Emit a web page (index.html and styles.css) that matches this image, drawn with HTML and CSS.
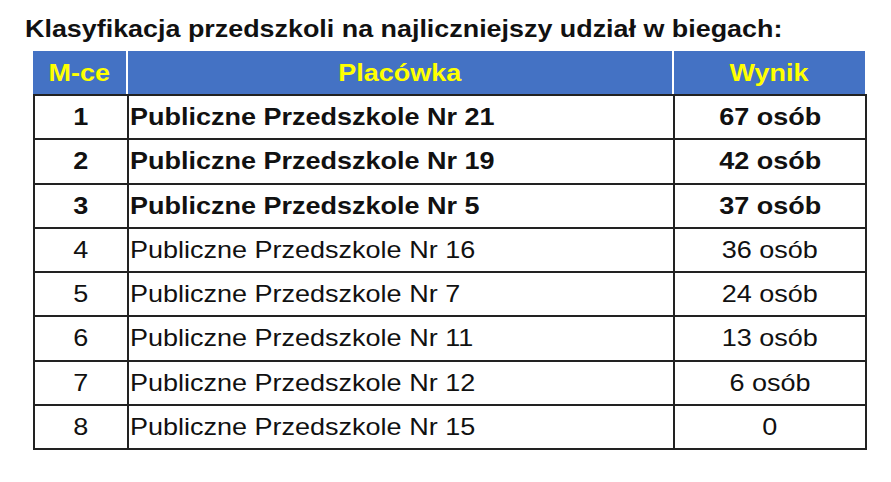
FILE: index.html
```html
<!DOCTYPE html>
<html lang="pl">
<head>
<meta charset="utf-8">
<title>Klasyfikacja przedszkoli</title>
<link rel="stylesheet" href="styles.css">
</head>
<body>
<div class="page">
  <h1 class="title"><span class="sx">Klasyfikacja przedszkoli na najliczniejszy udział w biegach:</span></h1>
  <div class="board">
    <div class="head">
      <div class="hcell"><span class="sx mid">M-ce</span></div>
      <div class="hcell"><span class="sx mid">Placówka</span></div>
      <div class="hcell"><span class="sx mid">Wynik</span></div>
    </div>
    <table class="ranking">
      <colgroup><col class="c1"><col class="c2"><col class="c3"></colgroup>
      <tbody>
        <tr class="top"><td class="num"><span class="sx mid">1</span></td><td class="name"><span class="sx">Publiczne Przedszkole Nr 21</span></td><td class="res"><span class="sx mid">67 osób</span></td></tr>
        <tr class="top"><td class="num"><span class="sx mid">2</span></td><td class="name"><span class="sx">Publiczne Przedszkole Nr 19</span></td><td class="res"><span class="sx mid">42 osób</span></td></tr>
        <tr class="top"><td class="num"><span class="sx mid">3</span></td><td class="name"><span class="sx">Publiczne Przedszkole Nr 5</span></td><td class="res"><span class="sx mid">37 osób</span></td></tr>
        <tr><td class="num"><span class="sx mid">4</span></td><td class="name"><span class="sx">Publiczne Przedszkole Nr 16</span></td><td class="res"><span class="sx mid">36 osób</span></td></tr>
        <tr><td class="num"><span class="sx mid">5</span></td><td class="name"><span class="sx">Publiczne Przedszkole Nr 7</span></td><td class="res"><span class="sx mid">24 osób</span></td></tr>
        <tr><td class="num"><span class="sx mid">6</span></td><td class="name"><span class="sx">Publiczne Przedszkole Nr 11</span></td><td class="res"><span class="sx mid">13 osób</span></td></tr>
        <tr><td class="num"><span class="sx mid">7</span></td><td class="name"><span class="sx">Publiczne Przedszkole Nr 12</span></td><td class="res"><span class="sx mid">6 osób</span></td></tr>
        <tr><td class="num"><span class="sx mid">8</span></td><td class="name"><span class="sx">Publiczne Przedszkole Nr 15</span></td><td class="res"><span class="sx mid">0</span></td></tr>
      </tbody>
    </table>
  </div>
</div>
</body>
</html>
```
FILE: styles.css
```css
* { box-sizing: border-box; }
html, body { margin: 0; padding: 0; background: #fff; }
body { font-family: "Liberation Sans", Arial, sans-serif; color: #111; }
.page { padding: 13px 0 0 25px; }
.sx {
  display: inline-block;
  transform: scaleX(1.125);
  transform-origin: left center;
  white-space: nowrap;
}
.sx.mid { transform-origin: center center; }
.title {
  margin: 0 0 7px 0;
  font-size: 24px;
  font-weight: bold;
  line-height: 31px;
  color: #111;
}
.title .sx { transform: scaleX(1.12); }
.board { margin-left: 8px; width: 832px; }
.head {
  display: grid;
  grid-template-columns: 93px 544px 191px;
  column-gap: 2px;
  height: 43px;
}
.hcell {
  background: #4472c4;
  color: #ffff00;
  font-weight: bold;
  font-size: 24px;
  display: flex;
  align-items: center;
  justify-content: center;
}
.ranking {
  border-collapse: collapse;
  width: 832px;
  table-layout: fixed;
}
.ranking col.c1 { width: 94px; }
.ranking col.c2 { width: 546px; }
.ranking col.c3 { width: 192px; }
.ranking td {
  border: 2px solid #222;
  height: 44.25px;
  padding: 0;
  font-size: 24px;
  line-height: 26px;
}
.ranking td.num, .ranking td.res { text-align: center; }
.ranking td.name { padding-left: 1px; }
.ranking tr.top td { font-weight: bold; }
```
